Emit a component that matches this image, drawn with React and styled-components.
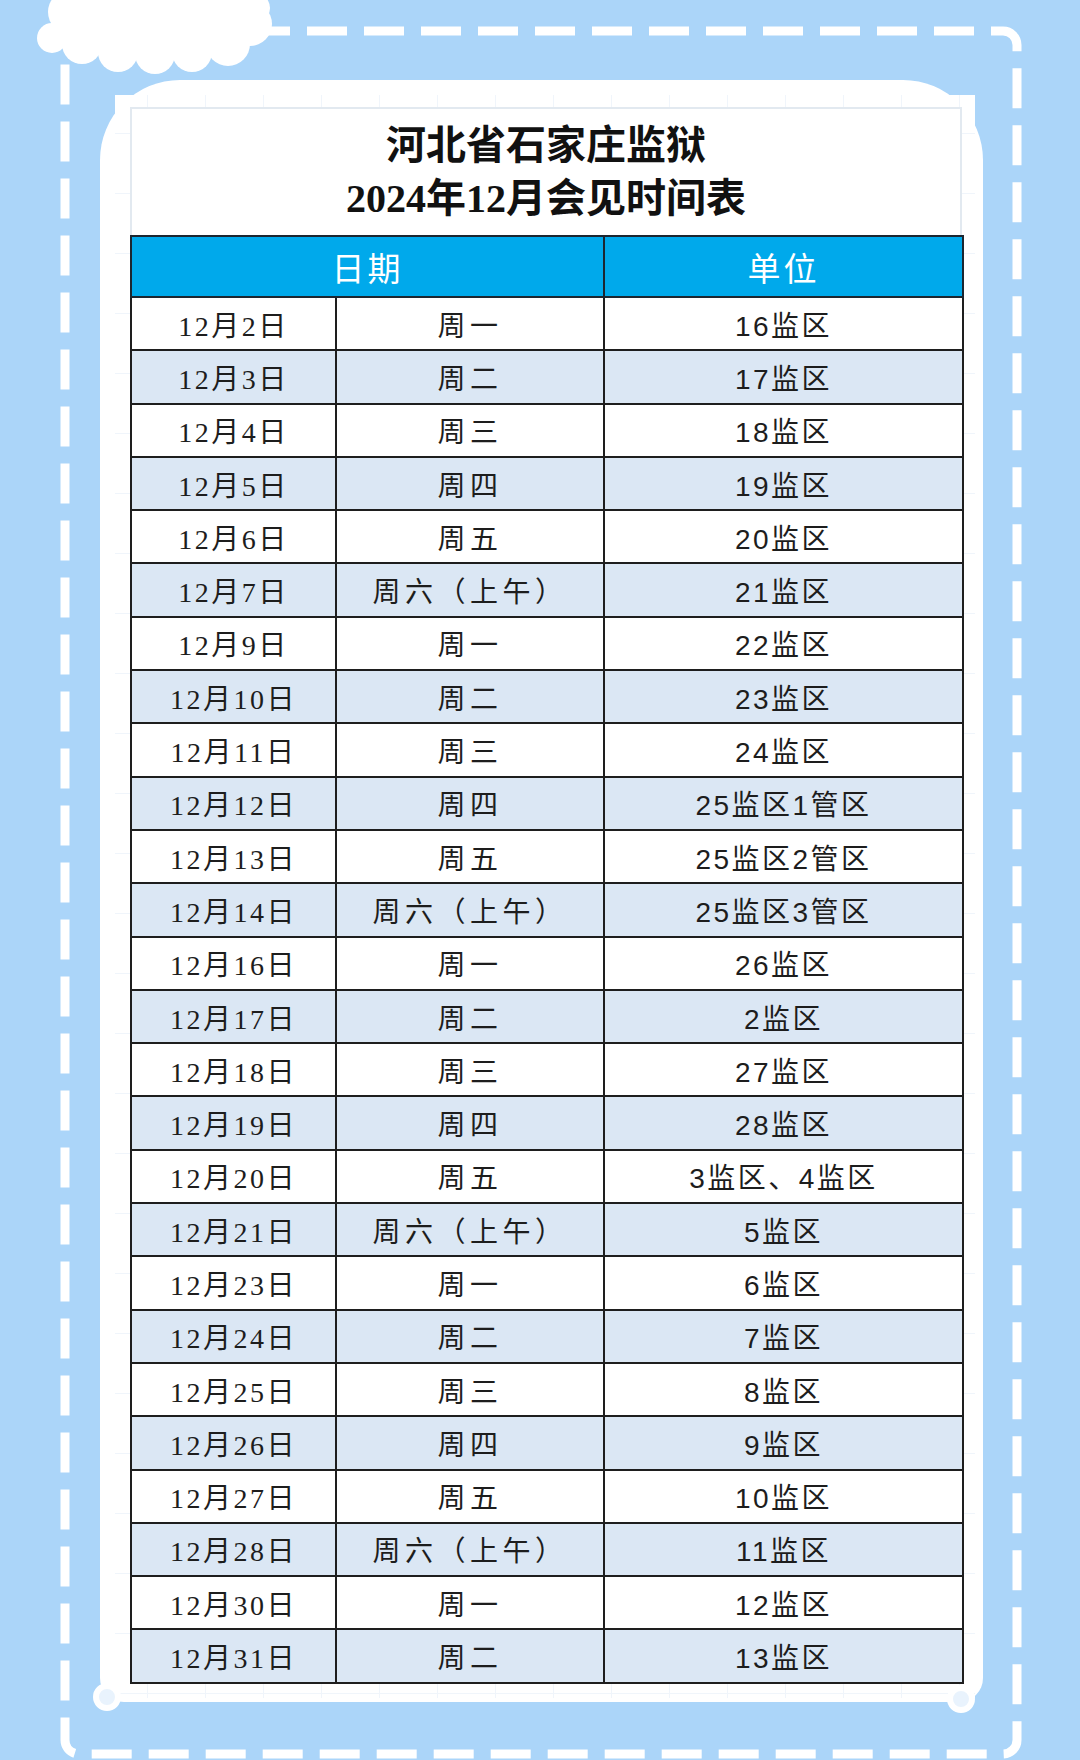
import React from "react";
import styled, { createGlobalStyle } from "styled-components";

const Global = createGlobalStyle`
  html, body { margin: 0; padding: 0; background: #abd5f9; }
  * { box-sizing: border-box; }
`;

const Page = styled.div`
  position: relative;
  width: 1080px;
  height: 1760px;
  overflow: hidden;
  background: #abd5f9;
  padding: 80px 0 0 100px;
`;

const Decor = styled.svg`
  position: absolute;
  left: 0;
  top: 0;
  width: 1080px;
  height: 1760px;
  pointer-events: none;
  z-index: ${(p) => (p.$front ? 2 : 0)};
`;

const Panel = styled.div`
  position: relative;
  z-index: 1;
  width: 883px;
  height: 1622px;
  background: #ffffff;
  border-radius: 80px 80px 24px 24px;
  padding: 15px 8px 0 15px;
`;

const Paper = styled.div`
  width: 860px;
  height: 1603px;
  background-color: #ffffff;
  background-image:
    linear-gradient(to right, #f0f5fb 1px, transparent 1px),
    linear-gradient(to bottom, #f0f5fb 1px, transparent 1px);
  background-size: 58px 60px;
  background-position: 32px 38px;
  padding: 12px 13px 0 15px;
`;

const TitleBox = styled.div`
  background: #ffffff;
  border: 2px solid #e2e9f0;
  border-bottom: none;
  padding: 10px 0 10px;
  text-align: center;
  font-family: "Liberation Serif", "Noto Sans CJK SC", serif;
  font-weight: 700;
  font-size: 40px;
  line-height: 53px;
  color: #111;
`;

const Table = styled.table`
  width: 832px;
  border-collapse: collapse;
  table-layout: fixed;
  background: #ffffff;
`;

const Th = styled.th`
  height: 61px;
  background: #00a9eb;
  color: #ffffff;
  border: 2px solid #1c2630;
  font-family: "Liberation Sans", "Noto Sans CJK SC", sans-serif;
  font-weight: 400;
  font-size: 33px;
  letter-spacing: 3px;
  padding: 0;
  text-align: center;
`;

const Row = styled.tr`
  height: 53.3px;
  background: ${(p) => (p.$alt ? "#dbe7f4" : "#ffffff")};
`;

const Td = styled.td`
  border: 2px solid #1e1e1e;
  padding: 0;
  text-align: center;
  color: #1d1d1d;
  font-size: 28px;
  font-family: ${(p) =>
    p.$sans
      ? `"Liberation Sans", "Noto Sans CJK SC", sans-serif`
      : `"Liberation Serif", "Noto Sans CJK SC", serif`};
  letter-spacing: ${(p) => p.$spacing};
`;

const rows = [
  ["12月2日", "周一", "16监区"],
  ["12月3日", "周二", "17监区"],
  ["12月4日", "周三", "18监区"],
  ["12月5日", "周四", "19监区"],
  ["12月6日", "周五", "20监区"],
  ["12月7日", "周六（上午）", "21监区"],
  ["12月9日", "周一", "22监区"],
  ["12月10日", "周二", "23监区"],
  ["12月11日", "周三", "24监区"],
  ["12月12日", "周四", "25监区1管区"],
  ["12月13日", "周五", "25监区2管区"],
  ["12月14日", "周六（上午）", "25监区3管区"],
  ["12月16日", "周一", "26监区"],
  ["12月17日", "周二", "2监区"],
  ["12月18日", "周三", "27监区"],
  ["12月19日", "周四", "28监区"],
  ["12月20日", "周五", "3监区、4监区"],
  ["12月21日", "周六（上午）", "5监区"],
  ["12月23日", "周一", "6监区"],
  ["12月24日", "周二", "7监区"],
  ["12月25日", "周三", "8监区"],
  ["12月26日", "周四", "9监区"],
  ["12月27日", "周五", "10监区"],
  ["12月28日", "周六（上午）", "11监区"],
  ["12月30日", "周一", "12监区"],
  ["12月31日", "周二", "13监区"],
];

function BackDecor() {
  return (
    <Decor viewBox="0 0 1080 1760">
      <rect
        x="65"
        y="31"
        width="952"
        height="1723"
        rx="14"
        fill="none"
        stroke="#ffffff"
        strokeWidth="9"
        strokeDasharray="40 17"
      />
      <g fill="#ffffff">
        <ellipse cx="160" cy="8" rx="110" ry="40" />
        <circle cx="52" cy="38" r="15" />
        <circle cx="82" cy="44" r="20" />
        <circle cx="118" cy="52" r="20" />
        <circle cx="155" cy="54" r="20" />
        <circle cx="192" cy="52" r="20" />
        <circle cx="228" cy="44" r="22" />
        <circle cx="250" cy="24" r="22" />
        <circle cx="238" cy="2" r="24" />
        <circle cx="70" cy="12" r="22" />
      </g>
    </Decor>
  );
}

function FrontDecor() {
  return (
    <Decor $front viewBox="0 0 1080 1760">
      <circle cx="107" cy="1697" r="11" fill="#e9f3fd" stroke="#ffffff" strokeWidth="6" />
      <circle cx="961" cy="1699" r="11" fill="#e9f3fd" stroke="#ffffff" strokeWidth="6" />
    </Decor>
  );
}

export default function App() {
  return (
    <>
      <Global />
      <Page>
        <BackDecor />
        <Panel>
          <Paper>
            <TitleBox>
              河北省石家庄监狱
              <br />
              2024年12月会见时间表
            </TitleBox>
            <Table>
              <colgroup>
                <col style={{ width: "205px" }} />
                <col style={{ width: "268px" }} />
                <col style={{ width: "359px" }} />
              </colgroup>
              <thead>
                <tr>
                  <Th colSpan={2}>日期</Th>
                  <Th>单位</Th>
                </tr>
              </thead>
              <tbody>
                {rows.map(([d, w, u], i) => (
                  <Row key={d} $alt={i % 2 === 1}>
                    <Td $spacing="2.5px">{d}</Td>
                    <Td $spacing="4.5px">{w}</Td>
                    <Td $sans $spacing="2.5px">{u}</Td>
                  </Row>
                ))}
              </tbody>
            </Table>
          </Paper>
        </Panel>
        <FrontDecor />
      </Page>
    </>
  );
}
